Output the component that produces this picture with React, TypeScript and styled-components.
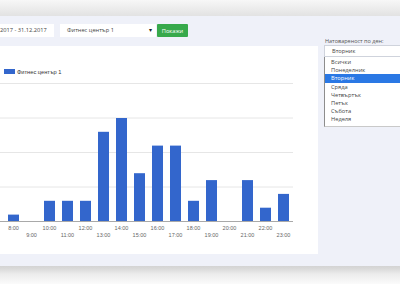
import React from "react";
import styled, { createGlobalStyle } from "styled-components";

const GlobalStyle = createGlobalStyle`
  html, body {
    margin: 0;
    padding: 0;
    background: #ffffff;
    overflow: hidden;
  }
  body {
    font-family: "Open Sans", "Liberation Sans", Arial, sans-serif;
  }
`;

const Frame = styled.div`
  display: flex;
  flex-direction: column;
  height: 284px;
  overflow: hidden;
  width: 400px;
`;

const TopShade = styled.div`
  background: linear-gradient(to bottom, #f7f7f7, #e2e2e2);
  flex: 0 0 16px;
`;

const BottomShade = styled.div`
  background: linear-gradient(
    to bottom,
    #d3d3d3 0,
    #dadada 3px,
    #ececec 8px,
    #fbfbfb 100%
  );
  flex: 1;
`;

const Panel = styled.div`
  background: #eff1f9;
  flex: 0 0 250px;
  overflow: hidden;
  padding-top: 8px;
  box-sizing: border-box;
`;

const Content = styled.div`
  display: flex;
  flex-direction: column;
  margin-left: -21px;
`;

const Toolbar = styled.div`
  align-items: center;
  display: flex;
  height: 13px;
`;

const Field = styled.div`
  background: #ffffff;
  box-sizing: border-box;
  color: #444;
  font-size: 5.7px;
  height: 13px;
  line-height: 13px;
  overflow: hidden;
  white-space: nowrap;
`;

const DateField = styled(Field)`
  padding-left: 5px;
  width: 75px;
`;

const CenterSelect = styled(Field)`
  display: flex;
  justify-content: space-between;
  margin-left: 6px;
  padding: 0 4px 0 7px;
  width: 96px;
`;

const Arrow = styled.span`
  color: #222;
  font-size: 6px;
`;

const ShowButton = styled.button`
  background: #37a94b;
  border: none;
  border-radius: 1px;
  color: #ffffff;
  font: 5.7px "Open Sans", "Liberation Sans", sans-serif;
  height: 13px;
  margin-left: 1px;
  padding: 0;
  width: 31px;
`;

const BodyRow = styled.div`
  align-items: flex-start;
  display: flex;
`;

const ChartCard = styled.div`
  background: #ffffff;
  flex: 0 0 339px;
  height: 208px;
  margin-top: 9px;
`;

const SideColumn = styled.div`
  display: flex;
  flex: 0 0 90px;
  flex-direction: column;
  margin-left: 6px;
`;

const FieldLabel = styled.div`
  color: #555;
  font-size: 5.5px;
  height: 8px;
  line-height: 8px;
  padding-left: 1px;
`;

const DaySelect = styled.div`
  background: #ffffff;
  border: 1px solid #cfd3dc;
  box-sizing: border-box;
  color: #444;
  font-size: 5.7px;
  height: 12px;
  line-height: 10px;
  padding-left: 7px;
`;

const DayList = styled.div`
  background: #ffffff;
  border-left: 1px solid #8d8d8d;
  border-bottom: 1px solid #c9c9c9;
  display: flex;
  flex-direction: column;
  padding: 1px 0 2px;
`;

const DayOption = styled.div<{ $active?: boolean }>`
  background: ${(p) => (p.$active ? "#2a78e4" : "transparent")};
  color: ${(p) => (p.$active ? "#ffffff" : "#444")};
  font-size: 5.7px;
  height: 8.2px;
  line-height: 8.2px;
  padding-left: 6px;
`;

const BAR = "#3366cc";
const BASE = 221.5;
const UNIT = 6.9;
const values = [1, 0, 3, 3, 3, 13, 15, 7, 11, 11, 3, 6, 0, 6, 2, 4];
const grid = [5, 10, 15, 20];
const days = [
  "Всички",
  "Понеделник",
  "Вторник",
  "Сряда",
  "Четвъртък",
  "Петък",
  "Събота",
  "Неделя",
];

const Chart = () => (
  <svg width={339} height={208} viewBox="-21 46 339 208">
    <rect x={4} y={69} width={11} height={5} fill={BAR} />
    <text x={17} y={73.6} fontSize={5.7} fill="#333" fontFamily="Liberation Sans, Arial, sans-serif">
      Фитнес център 1
    </text>
    {grid.map((g) => (
      <line
        key={g}
        x1={-6}
        x2={293}
        y1={BASE - g * UNIT}
        y2={BASE - g * UNIT}
        stroke="#e6e6e6"
        strokeWidth={1}
      />
    ))}
    {values.map((v, i) =>
      v > 0 ? (
        <rect
          key={i}
          x={8 + 18 * i}
          y={BASE - v * UNIT}
          width={11}
          height={v * UNIT}
          fill={BAR}
        />
      ) : null
    )}
    <line x1={-6} x2={293} y1={BASE} y2={BASE} stroke="#a9a9a9" strokeWidth={1} />
    {values.map((_, i) => (
      <text
        key={i}
        x={13.5 + 18 * i}
        y={i % 2 === 0 ? 229.6 : 237}
        fontSize={5.5}
        fill="#666"
        textAnchor="middle"
        fontFamily="Liberation Sans, Arial, sans-serif"
      >
        {8 + i}:00
      </text>
    ))}
  </svg>
);

export default function App() {
  return (
    <Frame>
      <GlobalStyle />
      <TopShade />
      <Panel>
        <Content>
          <Toolbar>
            <DateField>01.01.2017 - 31.12.2017</DateField>
            <CenterSelect>
              <span>Фитнес център 1</span>
              <Arrow>▾</Arrow>
            </CenterSelect>
            <ShowButton>Покажи</ShowButton>
          </Toolbar>
          <BodyRow>
            <ChartCard>
              <Chart />
            </ChartCard>
            <SideColumn>
              <FieldLabel>Натовареност по ден:</FieldLabel>
              <DaySelect>Вторник</DaySelect>
              <DayList>
                {days.map((d) => (
                  <DayOption key={d} $active={d === "Вторник"}>
                    {d}
                  </DayOption>
                ))}
              </DayList>
            </SideColumn>
          </BodyRow>
        </Content>
      </Panel>
      <BottomShade />
    </Frame>
  );
}
